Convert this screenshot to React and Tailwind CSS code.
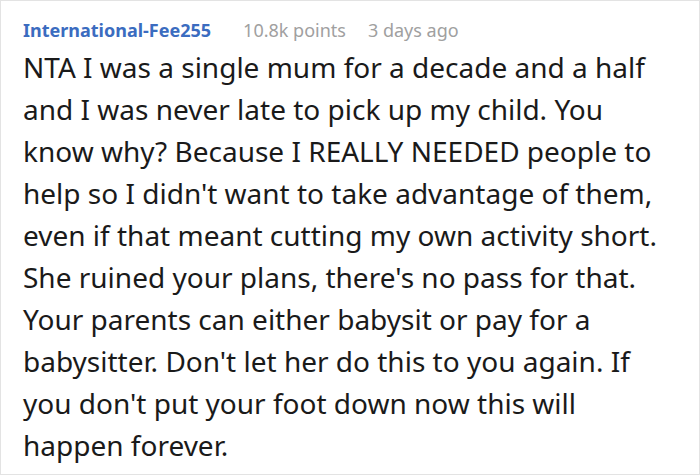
const lines = [
  "NTA I was a single mum for a decade and a half",
  "and I was never late to pick up my child. You",
  "know why? Because I REALLY NEEDED people to",
  "help so I didn't want to take advantage of them,",
  "even if that meant cutting my own activity short.",
  "She ruined your plans, there's no pass for that.",
  "Your parents can either babysit or pay for a",
  "babysitter. Don't let her do this to you again. If",
  "you don't put your foot down now this will",
  "happen forever.",
];

export default function App() {
  return (
    <div className="h-[475px] w-[700px] overflow-hidden border border-[#e3e3e3] bg-white px-[22px] pt-[17px] font-['Noto_Sans',sans-serif]">
      <div className="flex items-baseline text-[18px] leading-[24px]">
        <span className="font-bold text-[#3b6cc0]">International-Fee255</span>
        <span className="ml-[32px] text-[#a0a0a0]">10.8k points</span>
        <span className="ml-[22px] text-[#a0a0a0]">3 days ago</span>
      </div>
      <p className="mt-[4px] text-[28px] leading-[42px] text-[#1a1a1a]">
        {lines.map((line) => (
          <span key={line} className="block whitespace-nowrap">
            {line}
          </span>
        ))}
      </p>
    </div>
  );
}
